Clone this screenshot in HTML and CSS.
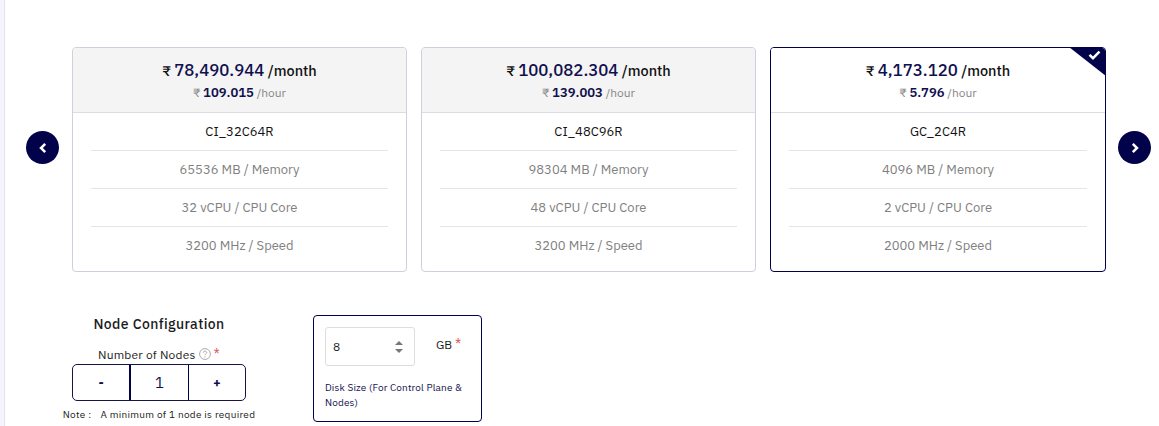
FILE: index.html
```html
<!DOCTYPE html>
<html lang="en">
<head>
<meta charset="utf-8">
<title>Node Configuration</title>
<link rel="stylesheet" href="styles.css">
</head>
<body>
<main class="panel">
  <section class="carousel">
    <button class="arrow" aria-label="Previous"><svg width="8" height="12" viewBox="0 0 8 12"><path d="M6.2 1.8 2 6l4.2 4.2"/></svg></button>
    <div class="plans">
      <article class="plan">
        <header class="plan-head">
          <p class="month"><span>₹</span> <b>78,490.944</b> <span>/month</span></p>
          <p class="hour"><span>₹</span> <b>109.015</b> <span>/hour</span></p>
        </header>
        <ul class="specs"><li class="name">CI_32C64R</li><li>65536 MB / Memory</li><li>32 vCPU / CPU Core</li><li>3200 MHz / Speed</li></ul>
      </article>
      <article class="plan">
        <header class="plan-head">
          <p class="month"><span>₹</span> <b>100,082.304</b> <span>/month</span></p>
          <p class="hour"><span>₹</span> <b>139.003</b> <span>/hour</span></p>
        </header>
        <ul class="specs"><li class="name">CI_48C96R</li><li>98304 MB / Memory</li><li>48 vCPU / CPU Core</li><li>3200 MHz / Speed</li></ul>
      </article>
      <article class="plan selected">
        <svg class="corner" width="37" height="29" viewBox="0 0 37 29"><path class="fold" d="M0 0H37V29Z"/><path class="tick" d="M20.5 7.8 24 11.2 30.5 4.7"/></svg>
        <header class="plan-head">
          <p class="month"><span>₹</span> <b>4,173.120</b> <span>/month</span></p>
          <p class="hour"><span>₹</span> <b>5.796</b> <span>/hour</span></p>
        </header>
        <ul class="specs"><li class="name">GC_2C4R</li><li>4096 MB / Memory</li><li>2 vCPU / CPU Core</li><li>2000 MHz / Speed</li></ul>
      </article>
    </div>
    <button class="arrow" aria-label="Next"><svg width="8" height="12" viewBox="0 0 8 12"><path d="M1.8 1.8 6 6 1.8 10.2"/></svg></button>
  </section>
  <section class="config">
    <div class="nodes">
      <h2>Node Configuration</h2>
      <p class="label"><span>Number of Nodes</span><svg width="12" height="12" viewBox="0 0 12 12"><circle cx="6" cy="6" r="5.4"/><path d="M4.3 4.7C4.3 2.6 7.7 2.6 7.7 4.6 7.7 5.8 6 5.8 6 7.2M6 8.2V9.3"/></svg><i>*</i></p>
      <div class="stepper"><button>-</button><span>1</span><button>+</button></div>
      <p class="note"><span>Note :</span><span class="note-text">A minimum of 1 node is required</span></p>
    </div>
    <div class="disk">
      <div class="disk-row">
        <div class="size"><span>8</span><svg width="8" height="14" viewBox="0 0 8 14"><path d="M0 5 4 1 8 5ZM0 9H8L4 13Z"/></svg></div>
        <span class="unit">GB <i>*</i></span>
      </div>
      <p class="disk-label">Disk Size (For Control Plane &amp; Nodes)</p>
    </div>
  </section>
</main>
</body>
</html>
```
FILE: styles.css
```css
* { box-sizing: border-box; margin: 0; padding: 0; }
body {
  height: 426px;
  overflow: hidden;
  background: #f5f4fc;
  font-family: "IBM Plex Sans", Roboto, sans-serif;
  color: #1b1b22;
}
button { font: inherit; background: none; border: 0; }
i { font-style: normal; font-size: 14px; color: #d9605c; }
.panel { height: 426px; margin-left: 4px; padding: 47px 8px 0 21px; background: #fff; border-left: 1px solid #e4e3f0; }
.carousel { display: flex; align-items: flex-start; justify-content: space-between; }
.arrow {
  display: flex; align-items: center; justify-content: center;
  width: 33px; height: 33px; margin-top: 84px;
  border-radius: 50%; background: #02024a;
}
.arrow path { fill: none; stroke: #fff; stroke-width: 2.5; }
.plans { display: grid; grid-template-columns: 335px 335px 336px; gap: 14px; }
.carousel .arrow:first-child { margin-right: 13px; }
.carousel .arrow:last-child { margin-left: 12px; }
.plan { position: relative; height: 225px; border: 1px solid #cfcfdd; border-radius: 4px; overflow: hidden; text-align: center; }
.plan-head { height: 65px; padding-top: 11px; background: #f4f4f4; border-bottom: 1px solid #dcdce2; }
.selected { border-color: #02024a; }
.selected .plan-head { background: #fff; }
.corner { position: absolute; top: -1px; right: -1px; }
.fold { fill: #02024a; }
.tick { fill: none; stroke: #fff; stroke-width: 2.5; }
.month { font-size: 14px; line-height: 23px; font-weight: 500; color: #111; white-space: nowrap; }
.month span:last-child { font-size: 14.5px; }
.month b { font-size: 16.8px; font-weight: 500; color: #10104f; }
.hour { font-size: 12px; line-height: 20px; color: #888; }
.hour b { font-size: 13px; font-weight: 600; color: #10104f; }
.specs { list-style: none; padding: 0 18px; }
.specs li { height: 38px; line-height: 37px; font-size: 13px; color: #808080; border-bottom: 1px solid #e5e5e8; }
.specs li:last-child { border: 0; }
.specs .name { color: #111; }
.config { display: flex; gap: 57px; padding: 43px 0 0 36px; }
.nodes { width: 194px; display: flex; flex-direction: column; align-items: center; }
h2 { margin-top: -1px; font-size: 14px; line-height: 20px; font-weight: 500; letter-spacing: .4px; }
.label { display: flex; align-items: center; gap: 3px; height: 20px; margin-top: 10px; font-size: 12px; letter-spacing: .2px; }
.label svg { fill: none; stroke: #aaa; stroke-width: 1; }
.stepper { display: flex; width: 174px; height: 37px; border: 1px solid #151548; border-radius: 5px; line-height: 35px; text-align: center; }
.stepper > * { flex: 1; }
.stepper button { font-size: 13px; font-weight: 700; color: #10104f; }
.stepper span { border-left: 2px solid #02024a; border-right: 1px solid #02024a; font-size: 15px; color: #10104f; }
.note { display: flex; gap: 9px; margin-top: 6px; font-size: 10px; line-height: 16px; letter-spacing: .29px; white-space: nowrap; }
.disk { width: 169px; height: 107px; padding: 11px; border: 1px solid #02024a; border-radius: 4px; }
.disk-row { display: flex; }
.size { display: flex; align-items: center; justify-content: space-between; width: 90px; height: 39px; padding: 0 11px 0 7px; border: 1px solid #dedede; border-radius: 3px; font-size: 12px; }
.size svg { fill: #777; }
.unit { margin: 8px 0 0 21px; font-size: 12px; line-height: 18px; }
.disk-label { margin-top: 14px; font-size: 10px; line-height: 15px; letter-spacing: .15px; color: #10104f; }
```
